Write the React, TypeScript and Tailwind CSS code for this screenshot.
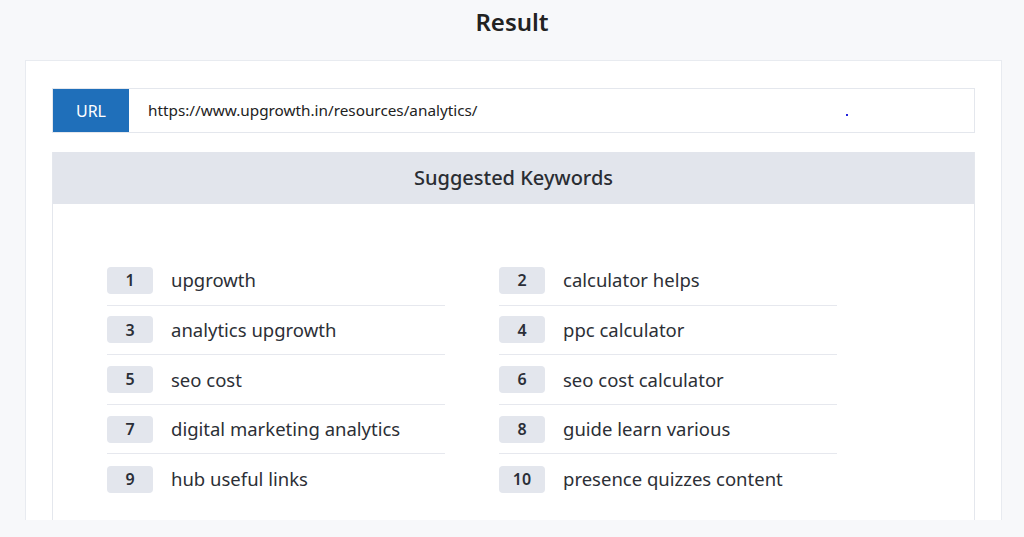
import React from "react";

const left = [
  [1, "upgrowth"],
  [3, "analytics upgrowth"],
  [5, "seo cost"],
  [7, "digital marketing analytics"],
  [9, "hub useful links"],
] as const;
const right = [
  [2, "calculator helps"],
  [4, "ppc calculator"],
  [6, "seo cost calculator"],
  [8, "guide learn various"],
  [10, "presence quizzes content"],
] as const;

function Column({ items }: { items: readonly (readonly [number, string])[] }) {
  return (
    <div className="w-[338px] flex flex-col">
      {items.map(([n, k], i) => (
        <div
          key={n}
          className={`flex items-center h-[49.6px] ${i < items.length - 1 ? "border-b border-[#e6e8ee]" : ""}`}
        >
          <div className="w-[46px] h-[27px] rounded-[4px] bg-[#e3e6ed] flex items-center justify-center text-[16px] font-semibold text-[#2b2f38]">
            {n}
          </div>
          <div className="ml-[18px] text-[18.5px] text-[#2c2f36]">{k}</div>
        </div>
      ))}
    </div>
  );
}

export default function App() {
  return (
    <div
      className="w-[1024px] h-[537px] bg-[#f7f8fa] overflow-hidden flex flex-col"
      style={{ fontFamily: '"Noto Sans", "Open Sans", sans-serif' }}
    >
      <div className="h-[44px] flex items-center justify-center text-[24px] font-semibold text-[#222]">
        Result
      </div>
      <div className="ml-[25px] mt-[16px] w-[977px] h-[460px] bg-white border border-[#e8ebf0] border-b-0 px-[26px] pt-[27px] flex flex-col">
        <div className="flex h-[45px] border border-[#e4e7ed]">
          <div className="w-[76px] bg-[#1f6fba] text-white text-[16px] flex items-center justify-center">
            URL
          </div>
          <div className="flex-1 flex items-center pl-[19px] text-[15.3px] text-[#222] relative">
            https://www.upgrowth.in/resources/analytics/
            <span className="absolute left-[717px] top-[25px] w-[2px] h-[2px] bg-[#2222dd]" />
          </div>
        </div>
        <div className="mt-[19px] border-x border-[#e4e7ed] flex-1">
          <div className="h-[52px] bg-[#e2e5ec] flex items-center justify-center text-[20px] font-medium text-[#2a2d33]">
            Suggested Keywords
          </div>
          <div className="flex gap-[54px] pl-[54px] pt-[52px]">
            <Column items={left} />
            <Column items={right} />
          </div>
        </div>
      </div>
    </div>
  );
}
